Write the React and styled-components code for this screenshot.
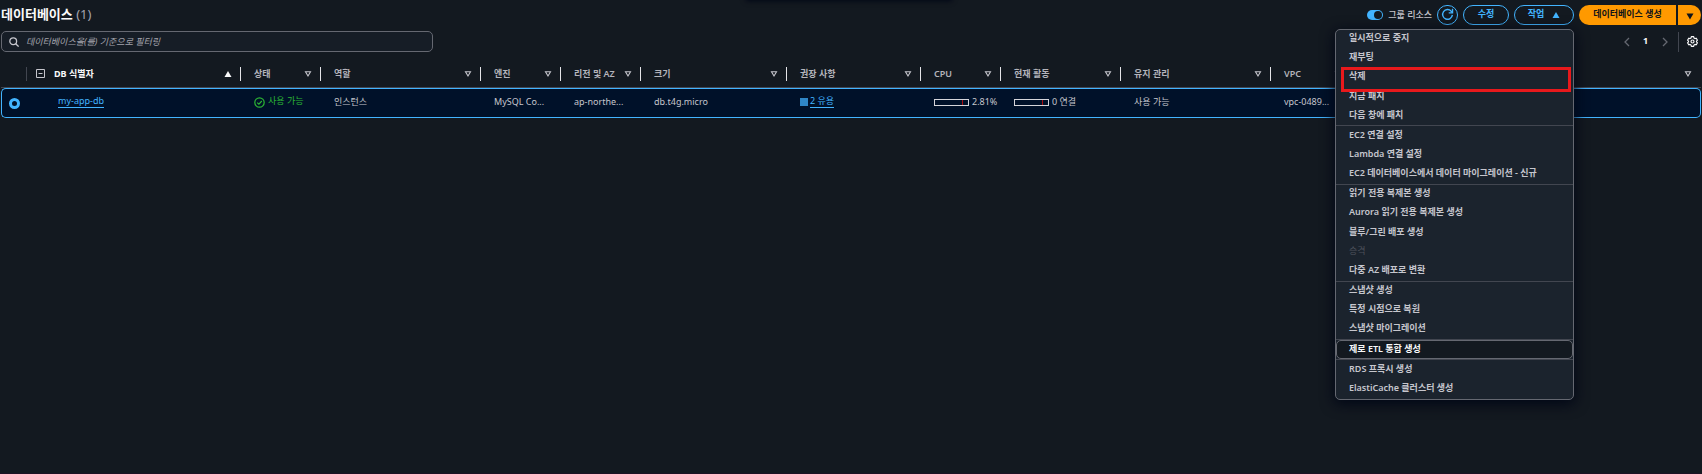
import React from 'react';
import styled, { createGlobalStyle } from 'styled-components';

const c = {
  bg: '#131920', panel: '#1b232d', line: '#424650', border: '#656871', text: '#c6c6cd',
  head: '#b4b4bb', white: '#f9f9fa', blue: '#42b4ff', orange: '#ff9900', green: '#2bb534',
  selected: '#001129', red: '#e8191c',
};

const Global = createGlobalStyle`
  *, *::before, *::after { box-sizing: border-box; }
  html { height: 100%; }
  body {
    margin: 0; min-height: 100%; background: ${c.bg}; color: ${c.text}; overflow: hidden;
    font: 9px/14px "Noto Sans", "Noto Sans CJK KR", sans-serif;
  }
  #root { min-height: 100vh; display: flex; flex-direction: column; border-bottom: 1px solid #1b1224; }
  button, input { font: inherit; color: inherit; }
  svg { display: block; flex: none; }
`;

const Page = styled.main`
  flex: 1;
  padding: 4px 1px 0;
`;
const FlashShadow = styled.div`
  position: absolute;
  top: -20px;
  left: 50%;
  width: 204px;
  height: 20px;
  margin-left: -104px;
  box-shadow: 0 0 5px 1px #000716;
`;
const Toolbar = styled.header`
  display: flex;
  align-items: center;
  justify-content: space-between;
  height: 21px;
`;
const Title = styled.h1`
  margin: 0;
  padding-bottom: 2px;
  font-size: 13px;
  line-height: 20px;
  font-weight: 700;
  color: ${c.white};
`;
const Count = styled.span`
  font-weight: 400;
  color: #a4a4ad;
`;
const Actions = styled.div`
  display: flex;
  align-items: center;
  gap: 5px;
`;
const ToggleLabel = styled.label`
  display: flex;
  align-items: center;
  gap: 5px;
  white-space: nowrap;
  font-size: 9px;
  font-weight: 500;
`;
const Toggle = styled.input`
  appearance: none;
  display: flex;
  justify-content: flex-end;
  width: 16px;
  height: 10px;
  margin: 0;
  padding: 1px;
  border-radius: 5px;
  background: ${c.blue};
  &::before { content: ''; width: 8px; height: 8px; border-radius: 50%; background: ${c.bg}; }
`;
const Pill = styled.button`
  display: flex;
  align-items: center;
  justify-content: center;
  gap: 8px;
  height: 20px;
  width: ${p => p.$width};
  padding: 0 0 2px;
  border: 1px solid ${c.blue};
  border-radius: 10px;
  background: transparent;
  color: ${c.blue};
  font-weight: 700;
  white-space: nowrap;
`;
const IconPill = styled(Pill)`
  padding: 0;
`;
const Split = styled.div`
  display: flex;
  gap: 2px;
`;
const Primary = styled.button`
  display: flex;
  align-items: center;
  justify-content: center;
  height: 20px;
  width: ${p => p.$width};
  padding: 0 0 2px;
  border: 0;
  border-radius: ${p => (p.$end ? '0 10px 10px 0' : '10px 0 0 10px')};
  background: ${c.orange};
  color: #0f141a;
  font-weight: 700;
  white-space: nowrap;
`;
const ArrowPrimary = styled(Primary)`
  padding: 2px 0 0;
`;
const MenuAnchor = styled.div`
  position: relative;
`;
const Menu = styled.ul`
  position: absolute;
  z-index: 2;
  top: 24px;
  right: 0;
  display: flex;
  flex-direction: column;
  width: 239px;
  height: 371px;
  margin: 0;
  padding: 0;
  list-style: none;
  border: 1px solid ${c.border};
  border-radius: 5px;
  background: ${c.panel};
  box-shadow: 0 3px 14px 1px #000716;
`;
const MenuItem = styled.li`
  flex: 1;
  display: flex;
  min-height: 0;
`;
const MenuButton = styled.button`
  flex: 1;
  padding: 0 12px 2px;
  border: ${p => (p.$active ? `1px solid ${c.border}` : '1px solid transparent')};
  border-radius: 5px;
  background: ${p => (p.$active ? c.bg : 'transparent')};
  color: ${p => (p.$active ? c.white : c.text)};
  font-weight: 600;
  text-align: left;
  white-space: nowrap;
  &:disabled { color: #4d515b; font-weight: 400; }
`;
const Separator = styled.li`
  height: 1px;
  background: ${c.line};
`;
const Marker = styled.li`
  position: absolute;
  top: 37px;
  left: 5px;
  right: 2px;
  height: 25px;
  border: 3px solid ${c.red};
  pointer-events: none;
`;
const FilterBar = styled.div`
  display: flex;
  align-items: center;
  justify-content: space-between;
  margin-top: 6px;
`;
const Search = styled.label`
  display: flex;
  align-items: center;
  gap: 7px;
  width: 432px;
  height: 21px;
  padding: 0 7px;
  border: 1px solid ${c.border};
  border-radius: 5px;
  background: #161d26;
  color: ${c.text};
`;
const SearchInput = styled.input`
  flex: 1;
  min-width: 0;
  padding: 0;
  border: 0;
  outline: 0;
  background: transparent;
  &::placeholder { color: #a4a4ad; font-style: italic; opacity: 1; }
`;
const Pager = styled.nav`
  display: flex;
  align-items: center;
  gap: 4px;
  height: 21px;
`;
const PlainButton = styled.button`
  display: flex;
  align-items: center;
  justify-content: center;
  width: 15px;
  height: 20px;
  padding: 0;
  border: 0;
  background: transparent;
  color: ${p => (p.$muted ? c.border : c.white)};
  font-weight: 700;
`;
const PageNumber = styled(PlainButton)`
  padding-bottom: 2px;
`;
const Preferences = styled.div`
  display: flex;
  margin-left: 2px;
  padding-left: 6px;
  padding-right: 1px;
  border-left: 1px solid ${c.line};
`;
const Table = styled.table`
  width: 100%;
  margin: 5px 0 0;
  table-layout: fixed;
  border-collapse: separate;
  border-spacing: 0;
`;
const Th = styled.th`
  height: 31px;
  padding: 3px 0 0;
  border-bottom: 1px solid ${c.line};
  color: ${p => (p.$sorted ? c.white : c.head)};
  font-weight: ${p => (p.$sorted ? 700 : 600)};
  text-align: left;
`;
const HeadCell = styled.div`
  display: flex;
  align-items: center;
  justify-content: space-between;
  height: 14px;
  padding: 0 8px 0 ${p => (p.$tight ? '9px' : '13px')};
  border-right: 1px solid ${p => p.$rule || '#e4e4e8'};
  white-space: nowrap;
`;
const HeadLabel = styled.span`
  display: flex;
  align-items: center;
  gap: 9px;
`;
const Td = styled.td`
  height: 30px;
  padding: 0 0 2px 13px;
  border: solid ${c.blue};
  border-width: 1px 0;
  background: ${c.selected};
  overflow: hidden;
  white-space: nowrap;
  text-overflow: ellipsis;
  &:first-child { padding: 0 0 0 7px; border-left-width: 1px; border-radius: 5px 0 0 5px; }
  &:last-child { border-right-width: 1px; border-radius: 0 5px 5px 0; }
`;
const Radio = styled.input`
  appearance: none;
  display: block;
  width: 11px;
  height: 11px;
  margin: 0;
  border: 3px solid ${c.blue};
  border-radius: 50%;
`;
const Line = styled.div`
  display: flex;
  align-items: center;
  gap: ${p => p.$gap || '3px'};
  padding-left: ${p => p.$indent || '0'};
  color: ${p => p.$color || 'inherit'};
`;
const Link = styled.a`
  margin-bottom: 1px;
  color: ${c.blue};
  line-height: 12px;
  text-decoration: none;
  border-bottom: 1px solid ${c.blue};
`;
const StatusText = styled.span`
  padding-bottom: 2px;
`;
const Square = styled.span`
  width: 8px;
  height: 8px;
  background: #2f86c6;
`;
const Meter = styled.span`
  display: flex;
  justify-content: flex-end;
  width: 35px;
  height: 7px;
  padding-right: 5px;
  border: 1px solid #d5d5da;
  &::after { content: ''; width: 1px; background: #a80d12; }
`;

const Sort = ({ up }) => (
  <svg width="8" height="8" viewBox="0 0 8 8" aria-hidden="true">
    {up ? <path d="M4 1 7.5 7h-7z" fill={c.white} /> : <path d="M1.5 1.8h5L4 6z" fill="none" stroke={c.text} strokeWidth="1.1" />}
  </svg>
);
const Caret = ({ down }) => (
  <svg width="8" height="8" viewBox="0 0 8 8" aria-hidden="true">
    <path d={down ? 'M.5 1.5h7L4 7.5z' : 'M4 2 7.5 8h-7z'} fill="currentColor" />
  </svg>
);
const Chevron = ({ right }) => (
  <svg width="8" height="10" viewBox="0 0 8 10" fill="none" stroke="currentColor" strokeWidth="1.3" aria-hidden="true">
    <path d={right ? 'M2 1l4 4-4 4' : 'M6 1 2 5l4 4'} />
  </svg>
);

const groups = [
  ['일시적으로 중지', '재부팅', '삭제', '지금 패치', '다음 창에 패치'],
  ['EC2 연결 설정', 'Lambda 연결 설정', 'EC2 데이터베이스에서 데이터 마이그레이션 - 신규'],
  ['읽기 전용 복제본 생성', 'Aurora 읽기 전용 복제본 생성', '블루/그린 배포 생성', '승격', '다중 AZ 배포로 변환'],
  ['스냅샷 생성', '특정 시점으로 복원', '스냅샷 마이그레이션'],
  ['제로 ETL 통합 생성'],
  ['RDS 프록시 생성', 'ElastiCache 클러스터 생성'],
];

const columns = [
  ['상태', 80], ['역할', 160], ['엔진', 80], ['리전 및 AZ', 80], ['크기', 146], ['권장 사항', 134],
  ['CPU', 80], ['현재 활동', 120], ['유지 관리', 150], ['VPC', 80],
];

export default function App() {
  return (
    <>
      <Global />
      <FlashShadow />
      <Page>
        <Toolbar>
          <Title>데이터베이스 <Count>(1)</Count></Title>
          <Actions>
            <ToggleLabel><Toggle type="checkbox" role="switch" defaultChecked />그룹 리소스</ToggleLabel>
            <IconPill $width="21px" aria-label="새로 고침">
              <svg width="13" height="13" viewBox="0 0 16 16" fill="none" stroke="currentColor" strokeWidth="1.7">
                <path d="M14 8.5A6 6 0 1 1 12.6 4L14 5.5" /><path d="M14.2 1v5H9.5" />
              </svg>
            </IconPill>
            <Pill $width="46px">수정</Pill>
            <MenuAnchor>
              <Pill $width="60px" aria-expanded="true">작업 <Caret /></Pill>
              <Menu>
                {groups.map((items, g) => (
                  <React.Fragment key={g}>
                    {g > 0 && <Separator role="separator" />}
                    {items.map(t => (
                      <MenuItem key={t}>
                        <MenuButton disabled={t === '승격'} $active={g === 4}>{t}</MenuButton>
                      </MenuItem>
                    ))}
                  </React.Fragment>
                ))}
                <Marker aria-hidden="true" />
              </Menu>
            </MenuAnchor>
            <Split>
              <Primary $width="97px">데이터베이스 생성</Primary>
              <ArrowPrimary $width="23px" $end aria-label="추가 생성 옵션"><Caret down /></ArrowPrimary>
            </Split>
          </Actions>
        </Toolbar>
        <FilterBar>
          <Search>
            <svg width="10" height="10" viewBox="0 0 10 10" fill="none" stroke="currentColor" strokeWidth="1.3" aria-hidden="true">
              <circle cx="4.2" cy="4.2" r="3.4" /><path d="M6.7 6.7 9.6 9.6" />
            </svg>
            <SearchInput aria-label="필터" placeholder="데이터베이스을(를) 기준으로 필터링" />
          </Search>
          <Pager>
            <PlainButton $muted aria-label="이전"><Chevron /></PlainButton>
            <PageNumber>1</PageNumber>
            <PlainButton $muted aria-label="다음"><Chevron right /></PlainButton>
            <Preferences>
              <PlainButton aria-label="기본 설정">
                <svg width="11" height="11" viewBox="0 0 16 16" fill="none" stroke="currentColor" strokeWidth="1.7" strokeLinejoin="round">
                  <path d="M6.3 1h3.4l.5 2 1.3.8 2-.6 1.7 2.9-1.4 1.4v1l1.4 1.4-1.7 2.9-2-.6-1.3.8-.5 2H6.3l-.5-2-1.3-.8-2 .6L.8 9.9l1.4-1.4v-1L.8 6.1l1.7-2.9 2 .6L5.800 3z" />
                  <circle cx="8" cy="8" r="2.2" />
                </svg>
              </PlainButton>
            </Preferences>
          </Pager>
        </FilterBar>
        <Table>
          <colgroup>
            <col width="26" /><col width="214" />
            {columns.map(([n, w]) => <col key={n} width={w} />)}
            <col />
          </colgroup>
          <thead>
            <tr>
              <Th><HeadCell $rule={c.line} /></Th>
              <Th $sorted>
                <HeadCell $tight>
                  <HeadLabel>
                    <svg width="9" height="9" viewBox="0 0 9 9" fill="none" stroke={c.text} aria-hidden="true">
                      <path d="M.5.5h8v8h-8zM2.5 4.5h4" />
                    </svg>
                    DB 식별자
                  </HeadLabel>
                  <Sort up />
                </HeadCell>
              </Th>
              {columns.map(([n]) => <Th key={n}><HeadCell>{n}<Sort /></HeadCell></Th>)}
              <Th><HeadCell $rule="transparent" $tight><span /><Sort /></HeadCell></Th>
            </tr>
          </thead>
          <tbody>
            <tr>
              <Td><Radio type="radio" name="db" aria-label="my-app-db" defaultChecked /></Td>
              <Td><Line $indent="18px"><Link href="#my-app-db">my-app-db</Link></Line></Td>
              <Td>
                <Line $color={c.green}>
                  <svg width="11" height="11" viewBox="0 0 11 11" fill="none" stroke="currentColor" strokeWidth="1.2" aria-hidden="true">
                    <circle cx="5.5" cy="5.5" r="4.7" /><path d="M3.2 5.600 4.900 7.200 7.800 4" />
                  </svg>
                  <StatusText>사용 가능</StatusText>
                </Line>
              </Td>
              <Td>인스턴스</Td>
              <Td>MySQL Co...</Td>
              <Td>ap-northe...</Td>
              <Td>db.t4g.micro</Td>
              <Td><Line $gap="2px"><Square /><Link href="#recommendations">2 유용</Link></Line></Td>
              <Td><Line><Meter />2.81%</Line></Td>
              <Td><Line><Meter />0 연결</Line></Td>
              <Td>사용 가능</Td>
              <Td>vpc-0489...</Td>
              <Td />
            </tr>
          </tbody>
        </Table>
      </Page>
    </>
  );
}
